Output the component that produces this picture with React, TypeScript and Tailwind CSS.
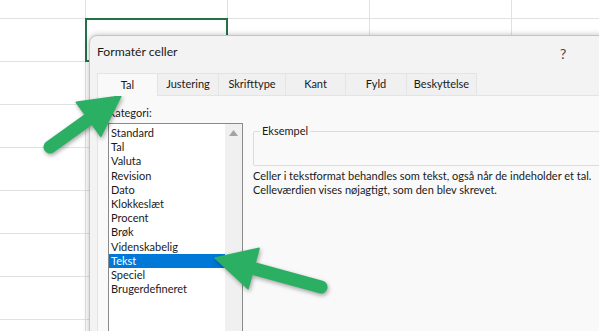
import React from "react";

const categories = [
  "Standard",
  "Tal",
  "Valuta",
  "Revision",
  "Dato",
  "Klokkeslæt",
  "Procent",
  "Brøk",
  "Videnskabelig",
  "Tekst",
  "Speciel",
  "Brugerdefineret",
];

const tabs = [
  { label: "Tal", w: "w-[61px]" },
  { label: "Justering", w: "w-[61px]" },
  { label: "Skrifttype", w: "w-[67px]" },
  { label: "Kant", w: "w-[60px]" },
  { label: "Fyld", w: "w-[61px]" },
  { label: "Beskyttelse", w: "w-[70px]" },
];

type Pt = [number, number];

function arrowParts(tail: Pt, tip: Pt, headLen: number, headHalf: number) {
  const dx = tip[0] - tail[0];
  const dy = tip[1] - tail[1];
  const len = Math.hypot(dx, dy);
  const ux = dx / len;
  const uy = dy / len;
  const nx = -uy;
  const ny = ux;
  const bx = tip[0] - ux * headLen;
  const by = tip[1] - uy * headLen;
  const head = `M${tip[0]},${tip[1]} L${bx + nx * headHalf},${by + ny * headHalf} L${bx - nx * headHalf},${by - ny * headHalf} Z`;
  return { head, base: [bx + ux * 2, by + uy * 2] as Pt };
}

function Arrow({ tail, tip }: { tail: Pt; tip: Pt }) {
  const { head, base } = arrowParts(tail, tip, 40, 21);
  return (
    <g>
      <line
        x1={tail[0]}
        y1={tail[1]}
        x2={base[0]}
        y2={base[1]}
        stroke="#2bb063"
        strokeWidth={13}
        strokeLinecap="round"
      />
      <path d={head} fill="#2bb063" stroke="#2bb063" strokeWidth={1.5} strokeLinejoin="round" />
    </g>
  );
}

function Sheet() {
  const rows = Array.from({ length: 9 });
  return (
    <div className="-mt-[24px] flex flex-col">
      {rows.map((_, r) => (
        <div key={r} className="flex h-[43px] border-b border-[#e1e1e1]">
          <div className="w-[86px] shrink-0 border-r border-[#e1e1e1]" />
          {[0, 1, 2, 3].map((c) => (
            <div
              key={c}
              className={`w-[142px] shrink-0 border-r border-[#e1e1e1] ${
                r === 1 && c === 0 ? "relative" : ""
              }`}
            >
              {r === 1 && c === 0 && (
                <div className="absolute -left-[1px] -top-[1px] h-[44px] w-[143px] border-2 border-[#217346]" />
              )}
            </div>
          ))}
        </div>
      ))}
    </div>
  );
}

export default function App() {
  return (
    <div
      className="relative h-[331px] w-[599px] overflow-hidden bg-white text-[#1a1a1a]"
      style={{ fontFamily: 'Lato, "Noto Sans", "Liberation Sans", sans-serif' }}
    >
      <Sheet />

      {/* Dialog */}
      <div className="absolute left-[89px] top-[35px] flex h-[320px] w-[600px] flex-col rounded-tl-[8px] border border-[#c4c4c4] bg-[#f3f3f3] shadow-[0_0_6px_rgba(0,0,0,0.25)]">
        <div className="flex h-[37px] items-start pl-[7px] pt-[7px]">
          <span className="w-[463px] text-[12.2px]">Formatér celler</span>
          <span className="text-[14px] text-[#444]">?</span>
        </div>

        <div className="flex h-[22px] pl-[7px]">
          {tabs.map((t, i) => (
            <div
              key={t.label}
              className={`${t.w} flex items-center justify-center border-t border-r border-[#e4e4e4] text-[11px] ${
                i === 0
                  ? "relative z-10 h-[23px] border-l bg-[#f9f9f9]"
                  : "bg-[#f0f0f0]"
              }`}
            >
              {t.label}
            </div>
          ))}
        </div>

        <div className="ml-[7px] flex flex-1 gap-[10px] border-l border-t border-[#e4e4e4] bg-[#f9f9f9] pl-[10px] pt-[10px]">
          <div className="flex w-[135px] flex-col">
            <span className="h-[17px] text-[11px] leading-[14px]">Kategori:</span>
            <div className="flex flex-1 border border-[#8a8a8a] bg-white">
              <div className="flex flex-1 flex-col pt-[2px]">
                {categories.map((c) => (
                  <div
                    key={c}
                    className={`h-[14.2px] pl-[2px] text-[11px] leading-[14.2px] ${
                      c === "Tekst" ? "bg-[#0078d7] text-white" : ""
                    }`}
                  >
                    {c}
                  </div>
                ))}
              </div>
              <div className="flex w-[17px] justify-center bg-[#f0f0f0] pt-[6px]">
                <svg width="9" height="6" viewBox="0 0 9 6">
                  <path d="M4.5 0 L9 6 L0 6 Z" fill="#a3a3a3" />
                </svg>
              </div>
            </div>
          </div>

          <div className="flex flex-1 flex-col">
            <div className="relative mt-[25px] h-[35px] rounded-[2px] border border-[#dcdcdc]">
              <span className="absolute -top-[8px] left-[6px] bg-[#f9f9f9] px-[2px] text-[11px] leading-[14px]">
                Eksempel
              </span>
            </div>
            <p className="mt-[3px] whitespace-nowrap text-[11px] leading-[14px]">
              Celler i tekstformat behandles som tekst, også når de indeholder et tal.
              <br />
              Celleværdien vises nøjagtigt, som den blev skrevet.
            </p>
          </div>
        </div>
      </div>

      {/* Callout arrows */}
      <svg
        className="pointer-events-none absolute left-0 top-0"
        width="599"
        height="331"
        viewBox="0 0 599 331"
        style={{ filter: "drop-shadow(1px 2px 2px rgba(0,0,0,0.35))" }}
      >
        <Arrow tail={[50, 147]} tip={[121, 96]} />
        <Arrow tail={[321, 287]} tip={[215, 258]} />
      </svg>
    </div>
  );
}
